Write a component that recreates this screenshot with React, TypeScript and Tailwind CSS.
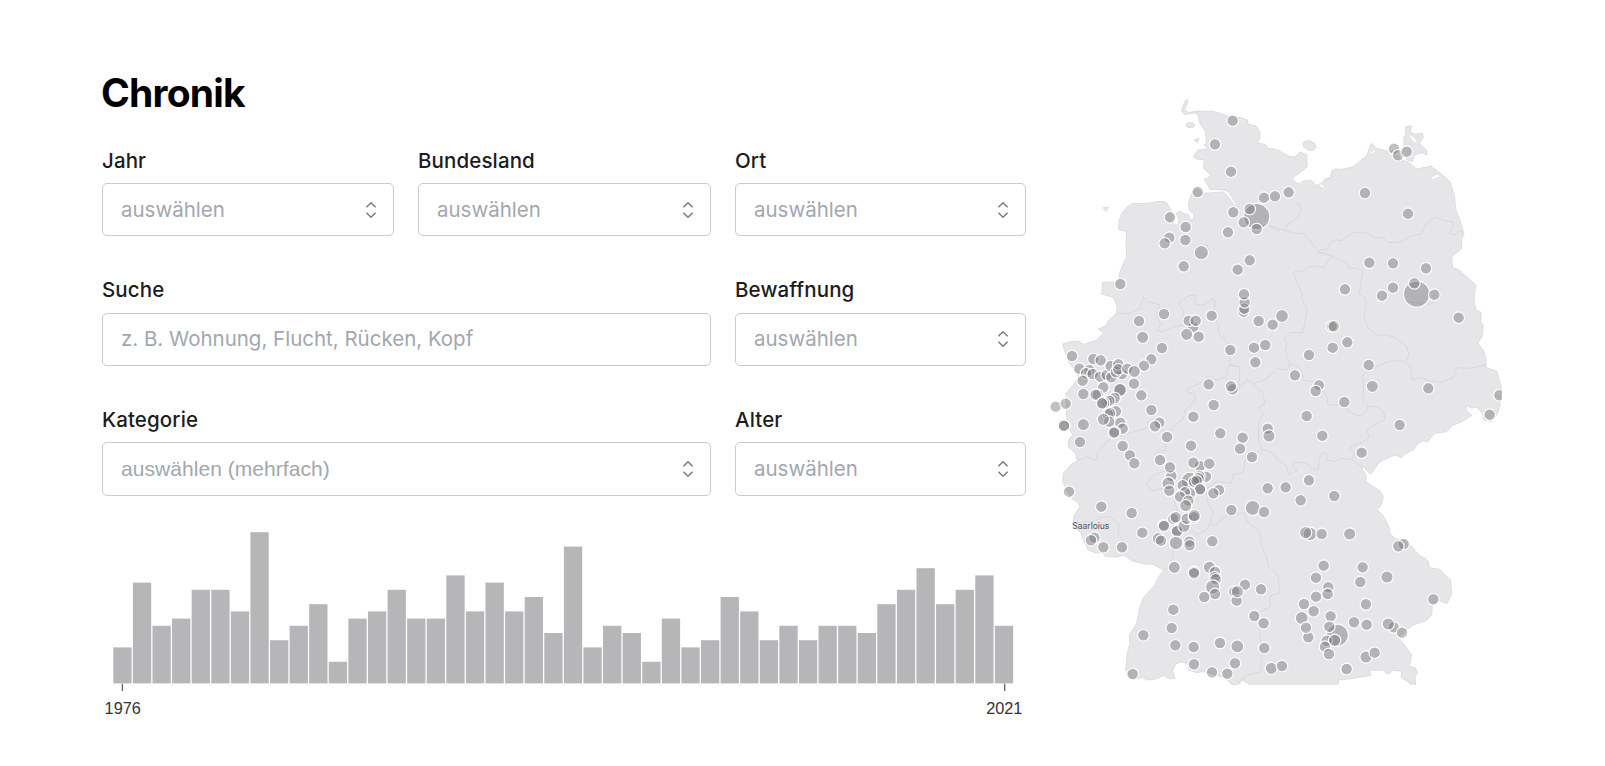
import React from "react";

const counts = [
  5, 14, 8, 9, 13, 13, 10, 21, 6, 8, 11, 3, 9, 10, 13, 9, 9, 15, 10, 14, 10, 12, 7, 19, 5, 8, 7, 3, 9, 5, 6, 12, 10, 6, 8,
  6, 8, 8, 7, 11, 13, 16, 11, 13, 15, 8,
];

const mainland =
  "466,93 500,94 516,93 550,103 560,108 600,112 622,120 624,132 648,138 660,155 658,178 652,190 676,193 685,206 700,206 720,213 735,222 750,230 766,230 780,216 800,224 802,260 780,278 758,293 762,304 778,312 790,303 814,301 830,317 850,306 853,298 870,292 876,272 885,267 905,268 940,260 960,243 980,228 993,190 1012,206 1022,208 1045,214 1062,212 1085,240 1105,246 1130,267 1165,260 1170,256 1180,265 1202,280 1230,305 1243,345 1248,390 1260,420 1272,462 1265,475 1265,505 1235,532 1237,563 1255,568 1280,590 1308,615 1304,635 1302,665 1308,690 1324,698 1322,725 1330,735 1326,770 1314,790 1330,810 1338,835 1338,862 1372,875 1376,895 1384,920 1380,975 1373,1000 1355,1025 1330,1020 1328,1000 1310,982 1295,984 1280,978 1278,990 1296,1006 1265,1025 1238,1036 1220,1055 1185,1060 1162,1086 1150,1082 1132,1092 1120,1110 1098,1120 1085,1133 1065,1125 1035,1138 1020,1145 992,1182 978,1170 974,1162 964,1162 978,1185 978,1205 1020,1233 1030,1250 1024,1275 1012,1290 1028,1305 1048,1342 1050,1362 1070,1378 1095,1382 1115,1400 1140,1428 1155,1434 1166,1445 1167,1463 1200,1468 1215,1485 1232,1500 1235,1542 1220,1572 1195,1560 1177,1575 1175,1605 1158,1622 1120,1635 1100,1650 1075,1673 1090,1690 1115,1725 1108,1760 1126,1763 1132,1778 1126,1790 1127,1820 1118,1820 1103,1805 1083,1792 1085,1773 1055,1771 1050,1780 1040,1782 1028,1770 988,1771 993,1786 940,1795 896,1800 893,1820 640,1820 607,1800 595,1814 575,1814 560,1798 530,1785 490,1775 470,1778 447,1770 443,1752 425,1745 407,1752 398,1773 405,1795 390,1797 370,1787 345,1798 318,1800 310,1792 280,1798 262,1785 257,1770 262,1720 270,1690 268,1665 290,1630 300,1580 312,1550 345,1515 356,1490 372,1470 335,1452 320,1453 275,1442 252,1425 235,1431 196,1430 190,1420 165,1418 145,1410 130,1380 122,1358 98,1335 103,1305 120,1280 115,1268 95,1255 85,1240 68,1205 70,1180 95,1152 112,1143 106,1120 85,1100 85,1080 98,1065 80,1030 78,940 100,915 115,892 100,865 82,840 68,792 90,785 115,784 132,793 170,780 192,758 175,748 200,735 205,722 228,702 232,680 220,652 185,642 188,607 236,605 240,575 260,530 258,490 260,455 235,448 238,420 245,400 262,380 280,370 318,371 350,365 370,364 380,368 390,385 400,408 395,420 402,435 414,435 416,415 408,400 420,393 430,400 445,404 450,420 462,415 460,402 447,390 445,370 455,340 470,325 490,340 520,338 550,336 565,350 578,370 590,382 592,378 575,350 565,335 550,330 510,328 493,298 508,292 512,285 497,272 490,262 493,240 470,237 460,230 473,210 505,207 492,195 500,190 496,155 480,130 475,110";

const islands = [
  "440,58 444,68 434,88 445,98 466,94 470,98 450,101 435,104 424,93 434,65",
  "438,132 445,128 458,128 465,135 458,143 442,142",
  "462,180 477,175 472,188",
  "189,383 206,382 198,395",
  "790,187 808,180 826,192 827,204 820,211 806,211 790,200",
  "1096,140 1115,138 1110,155 1125,163 1147,160 1150,172 1138,190 1145,198 1160,210 1161,225 1145,218 1122,226 1118,245 1102,240 1088,220 1092,195 1092,170 1098,165",
];

const lagoons = [
  "1105,165 1122,170 1133,190 1120,186",
  "984,226 996,214 1013,207 998,220",
  "1173,292 1193,283 1202,289 1180,297",
  "835,314 845,312 853,320 848,323",
];

const borders = [
  "672,405 678,425 690,440 720,452",
  "690,437 735,452 765,460 790,460 805,475 822,500 838,515 875,528",
  "762,365 782,378 783,395 770,415 740,435 735,452",
  "838,510 865,507 872,487 890,480 905,482 925,468 940,456 985,460 1000,472 1030,473 1045,487 1080,487 1110,470 1145,460 1150,447 1165,425 1185,412 1215,423 1240,425 1240,438 1228,458 1245,465 1262,452 1272,462",
  "838,515 830,518 860,523 875,528 860,550 850,563 825,558 800,562 790,573 765,573 760,585 775,615 785,640 785,655 802,688 795,725 788,757 750,758 732,775 742,790 735,810 750,852 740,870 710,865 690,888 670,902 640,910",
  "875,528 900,540 918,548 925,562 955,567 968,572 965,590 962,610 958,640 975,655 978,670 972,715 985,745 1010,765 1040,765 1070,775 1100,800 1108,825 1095,845 1070,842 1045,845 1010,860 985,870 968,885 970,930 970,970 985,978 975,1000 965,1007 945,1005 915,985 905,975 865,975 860,950 845,925 820,905 790,900 785,870 765,855 750,852",
  "1095,845 1112,860 1118,900 1145,892 1165,903 1205,907 1240,892 1250,863 1280,865 1300,863 1338,855",
  "985,978 1015,982 1033,1000 1033,1020 1010,1030 980,1050 988,1070 970,1085 945,1093 928,1105 945,1120 935,1138 950,1150 968,1160",
  "935,1138 900,1135 885,1145 862,1140 858,1120 845,1118 837,1140 835,1170 815,1165 800,1150 762,1147 760,1160 772,1170 745,1185 740,1160 720,1145 700,1125 690,1115 665,1108 655,1080 658,1020 670,1000 655,985 675,970 668,935 645,920 640,910",
  "640,910 620,900 598,925 598,905 600,860 570,855 570,820 560,785 535,760 535,735 520,705 525,665 520,655 500,670 490,677 465,672 465,645 445,648 415,670 430,690 430,735 400,740 370,755 350,750 362,735 350,705 360,675 325,665 310,650 300,685 270,700 235,700",
  "598,860 570,855 560,870 560,890 530,900 500,890 490,905 445,925 440,935 465,945 462,970 435,990 430,1015 400,1040 370,1075 380,1110 350,1115 345,1125 375,1145 385,1170 340,1185 318,1215 335,1232 375,1225 400,1240 410,1290 410,1300",
  "112,1143 140,1130 170,1140 172,1115 215,1072 240,1068 265,1060 320,1045 325,1025 345,1020 375,1060",
  "665,1108 615,1140 610,1175 580,1185 575,1210 530,1205 495,1230 505,1270 520,1300 510,1330 500,1350 470,1365 455,1350 430,1345",
  "510,1335 530,1335 550,1310 580,1300 615,1300 625,1330 660,1355 664,1395 680,1430 685,1460 710,1480 716,1500 718,1540 690,1548 692,1580 650,1600 660,1660 665,1720 662,1775 620,1785 595,1810",
  "375,1470 395,1440 405,1390 400,1330 410,1300",
  "103,1330 130,1325 160,1325 190,1310 210,1310 235,1330 235,1360 250,1385 252,1425",
  "458,495 480,500 502,493 505,512 490,530",
  "1092,660 1110,668 1150,668 1170,674 1184,662",
];

const places: number[][] = [
  [578, 122], [525, 193], [573, 275], [473, 336], [390, 412], [437, 441], [436, 480], [388, 473], [374, 490], [484, 518, 20],
  [431, 559], [241, 612], [564, 457], [580, 397], [650, 410, 38], [629, 387], [611, 427], [650, 447], [672, 353], [705, 349],
  [629, 541], [593, 569], [746, 337], [975, 339], [1104, 401], [1062, 206], [1074, 226], [1100, 215], [988, 548], [1059, 550],
  [1158, 565], [915, 628], [1059, 623], [1026, 647], [1130, 642, 38], [1123, 610], [1183, 644], [611, 695], [613, 686],
  [614, 667], [612, 643], [515, 707], [656, 723], [698, 734], [726, 708, 18], [372, 702], [297, 723], [308, 772, 17], [460, 741],
  [446, 722], [467, 722], [440, 763, 17], [476, 770], [366, 804], [571, 810], [642, 803], [676, 795], [646, 847], [334, 838],
  [312, 857], [96, 828], [160, 837], [182, 841], [118, 866], [148, 870], [138, 880], [158, 882], [180, 890], [200, 885],
  [212, 858], [246, 882], [214, 892], [228, 876], [235, 853], [235, 868], [262, 866], [283, 874, 17], [128, 902], [282, 911],
  [304, 946], [130, 942], [190, 922], [173, 944], [167, 944], [240, 930, 18], [240, 930, 18], [224, 954], [200, 966],
  [208, 962], [190, 970, 18], [186, 970], [228, 994], [204, 1003], [210, 1000], [208, 1025], [190, 1018, 17], [241, 1028],
  [248, 1046], [224, 1056], [222, 1058], [47, 980], [77, 971], [72, 1037, 17], [72, 1037], [130, 1034, 17], [120, 1086],
  [248, 1098], [270, 1126], [283, 1150], [334, 990], [358, 1028], [345, 1039], [381, 1071], [460, 1010], [506, 913],
  [578, 928], [573, 919], [521, 975], [541, 1060], [608, 1073], [600, 1106], [636, 1131], [453, 1097], [683, 1046],
  [687, 1068, 17], [683, 1225], [360, 1140], [394, 1188], [390, 1162], [385, 1210, 18], [388, 1232], [480, 1158], [460, 1148],
  [508, 1151], [498, 1190], [450, 1203, 25], [478, 1188], [475, 1196, 17], [462, 1205], [470, 1202], [428, 1216], [481, 1227],
  [480, 1228], [450, 1240], [435, 1237], [420, 1250], [445, 1262], [437, 1277, 17], [537, 1230], [520, 1240], [87, 1235],
  [184, 1280], [275, 1299], [574, 1290], [638, 1284, 21], [672, 1296], [1256, 713], [875, 739], [881, 739],
  [922, 787], [878, 803], [807, 825], [765, 886], [837, 916], [827, 933], [986, 855], [997, 919, 17], [913, 966],
  [1165, 925], [800, 1008], [847, 1067], [1079, 1035], [965, 1118], [1349, 1004], [1378, 946], [807, 1201], [737, 1222],
  [782, 1261], [883, 1248], [307, 1358], [163, 1373], [153, 1381], [190, 1402], [246, 1402], [371, 1335], [372, 1338],
  [355, 1376, 17], [363, 1382], [400, 1316], [407, 1312], [412, 1352, 17], [411, 1354], [432, 1339, 17], [440, 1316],
  [462, 1312], [463, 1307, 17], [408, 1389, 19], [448, 1385], [449, 1396], [517, 1384], [403, 1462, 17], [462, 1476],
  [462, 1480], [508, 1462, 17], [525, 1476], [524, 1492], [527, 1498], [518, 1521, 20], [525, 1542], [493, 1551],
  [615, 1514], [663, 1528], [583, 1535], [590, 1562], [592, 1535, 17], [400, 1589], [395, 1644], [310, 1666],
  [406, 1696], [461, 1701], [540, 1689], [592, 1699, 18], [673, 1704], [643, 1608], [671, 1630], [462, 1753], [585, 1750],
  [562, 1781], [516, 1777], [694, 1765, 17], [278, 1782], [726, 1758], [810, 1362, 19], [797, 1358, 17], [845, 1362],
  [929, 1362, 17], [1091, 1392], [1075, 1399], [851, 1457], [968, 1462], [828, 1493], [961, 1506], [1041, 1491, 17],
  [865, 1522], [863, 1542], [828, 1550], [1180, 1558], [792, 1572], [978, 1573], [821, 1594], [785, 1614, 18],
  [872, 1609], [805, 1672], [798, 1643], [942, 1627], [980, 1634], [1061, 1642], [1045, 1632, 17], [1086, 1658],
  [892, 1666, 32], [868, 1640], [860, 1682], [884, 1681, 17], [855, 1700], [867, 1722], [978, 1731, 17],
  [1004, 1718], [920, 1767],
];

type FieldProps = { label: string; text: string; wide?: boolean; multiple?: boolean; select?: boolean };

function Field({ label, text, wide, multiple, select = true }: FieldProps) {
  return (
    <div className={wide ? "col-span-2" : ""}>
      <div className="h-[37px] pt-[0.6px] text-[20.5px] leading-[28px] font-medium tracking-[0.12px] text-[#1c1c1e]">
        {label}
      </div>
      <div className="flex h-[53.4px] items-center justify-between rounded-[5px] border border-[#c8cbd3] pr-[15px] pl-[18px]">
        <span
          className={
            multiple
              ? "font-['Liberation_Sans',sans-serif] text-[21px] leading-[28px] tracking-[0.05px] text-[#a2a7af]"
              : "text-[20.5px] leading-[28px] tracking-[-0.01px] text-[#a2a7af]"
          }
        >
          {text}
        </span>
        {select && (
          <svg className="h-5 w-3.5" viewBox="0 0 14 20" fill="none" stroke="#797b80" strokeWidth="1.5">
            <path d="M2.4 7.2 7 2.7l4.6 4.5M2.4 12.8 7 17.3l4.6-4.5" />
          </svg>
        )}
      </div>
    </div>
  );
}

function YearChart() {
  const pitch = 19.59;
  return (
    <svg className="block h-[200px] w-[924px] font-['Liberation_Sans',sans-serif]" viewBox="0 0 924 200">
      {counts.map((n, i) => (
        <rect key={i} x={11.3 + i * pitch} y={167.4 - n * 7.2} width={18.3} height={n * 7.2} fill="#b6b6b8" />
      ))}
      <path d="M20.4 167.7v7.3M902.7 167.7v7.3" stroke="#626264" strokeWidth="1.3" />
      <g fontSize="16.3" fill="#333" textAnchor="middle">
        <text x="20.7" y="197.6">1976</text>
        <text x="902.3" y="197.6">2021</text>
      </g>
    </svg>
  );
}

function GermanyMap() {
  return (
    <svg className="block h-[604.67px] w-[461.67px] shrink-0" viewBox="0 0 1385 1814">
      <g fill="#e6e6e8" stroke="#d9d9dc" strokeWidth="2.5" strokeLinejoin="round">
        <polygon points={mainland} />
        {islands.map((p) => (
          <polygon key={p} points={p} />
        ))}
      </g>
      <g fill="#fff" stroke="#dfdfe2" strokeWidth="1.5">
        {lagoons.map((p) => (
          <polygon key={p} points={p} />
        ))}
      </g>
      <g fill="none" stroke="#d7d7da" strokeWidth="2.6" strokeLinejoin="round">
        {borders.map((p) => (
          <polyline key={p} points={p} />
        ))}
      </g>
      <g fill="#777779" fillOpacity="0.46" stroke="#fff" strokeWidth="3.4">
        {places.map(([x, y, r = 16], i) => (
          <circle key={i} cx={x} cy={y} r={r + 1.4} />
        ))}
      </g>
      <text x="97" y="1346" fontSize="26" fill="#55526b" className="font-['Inter',sans-serif]" textLength="111">
        Saarloius
      </text>
    </svg>
  );
}

export default function App() {
  return (
    <div className="flex h-[766px] w-[1605px] gap-3.5 overflow-hidden bg-white pl-[102px] font-['Inter',sans-serif]">
      <main className="w-[924px] shrink-0 pt-[70px]">
        <h1 className="-mt-px -ml-px h-[77px] text-[39px] leading-[48px] font-bold tracking-[-0.8px] text-black">
          Chronik
        </h1>
        <div className="grid grid-cols-[292px_293px_291px] gap-x-6 gap-y-[39.3px]">
          <Field label="Jahr" text="auswählen" />
          <Field label="Bundesland" text="auswählen" />
          <Field label="Ort" text="auswählen" />
          <Field label="Suche" text="z. B. Wohnung, Flucht, Rücken, Kopf" wide select={false} />
          <Field label="Bewaffnung" text="auswählen" />
          <Field label="Kategorie" text="auswählen (mehrfach)" wide multiple />
          <Field label="Alter" text="auswählen" />
        </div>
        <div className="mt-5">
          <YearChart />
        </div>
      </main>
      <aside className="pt-20">
        <GermanyMap />
      </aside>
    </div>
  );
}
